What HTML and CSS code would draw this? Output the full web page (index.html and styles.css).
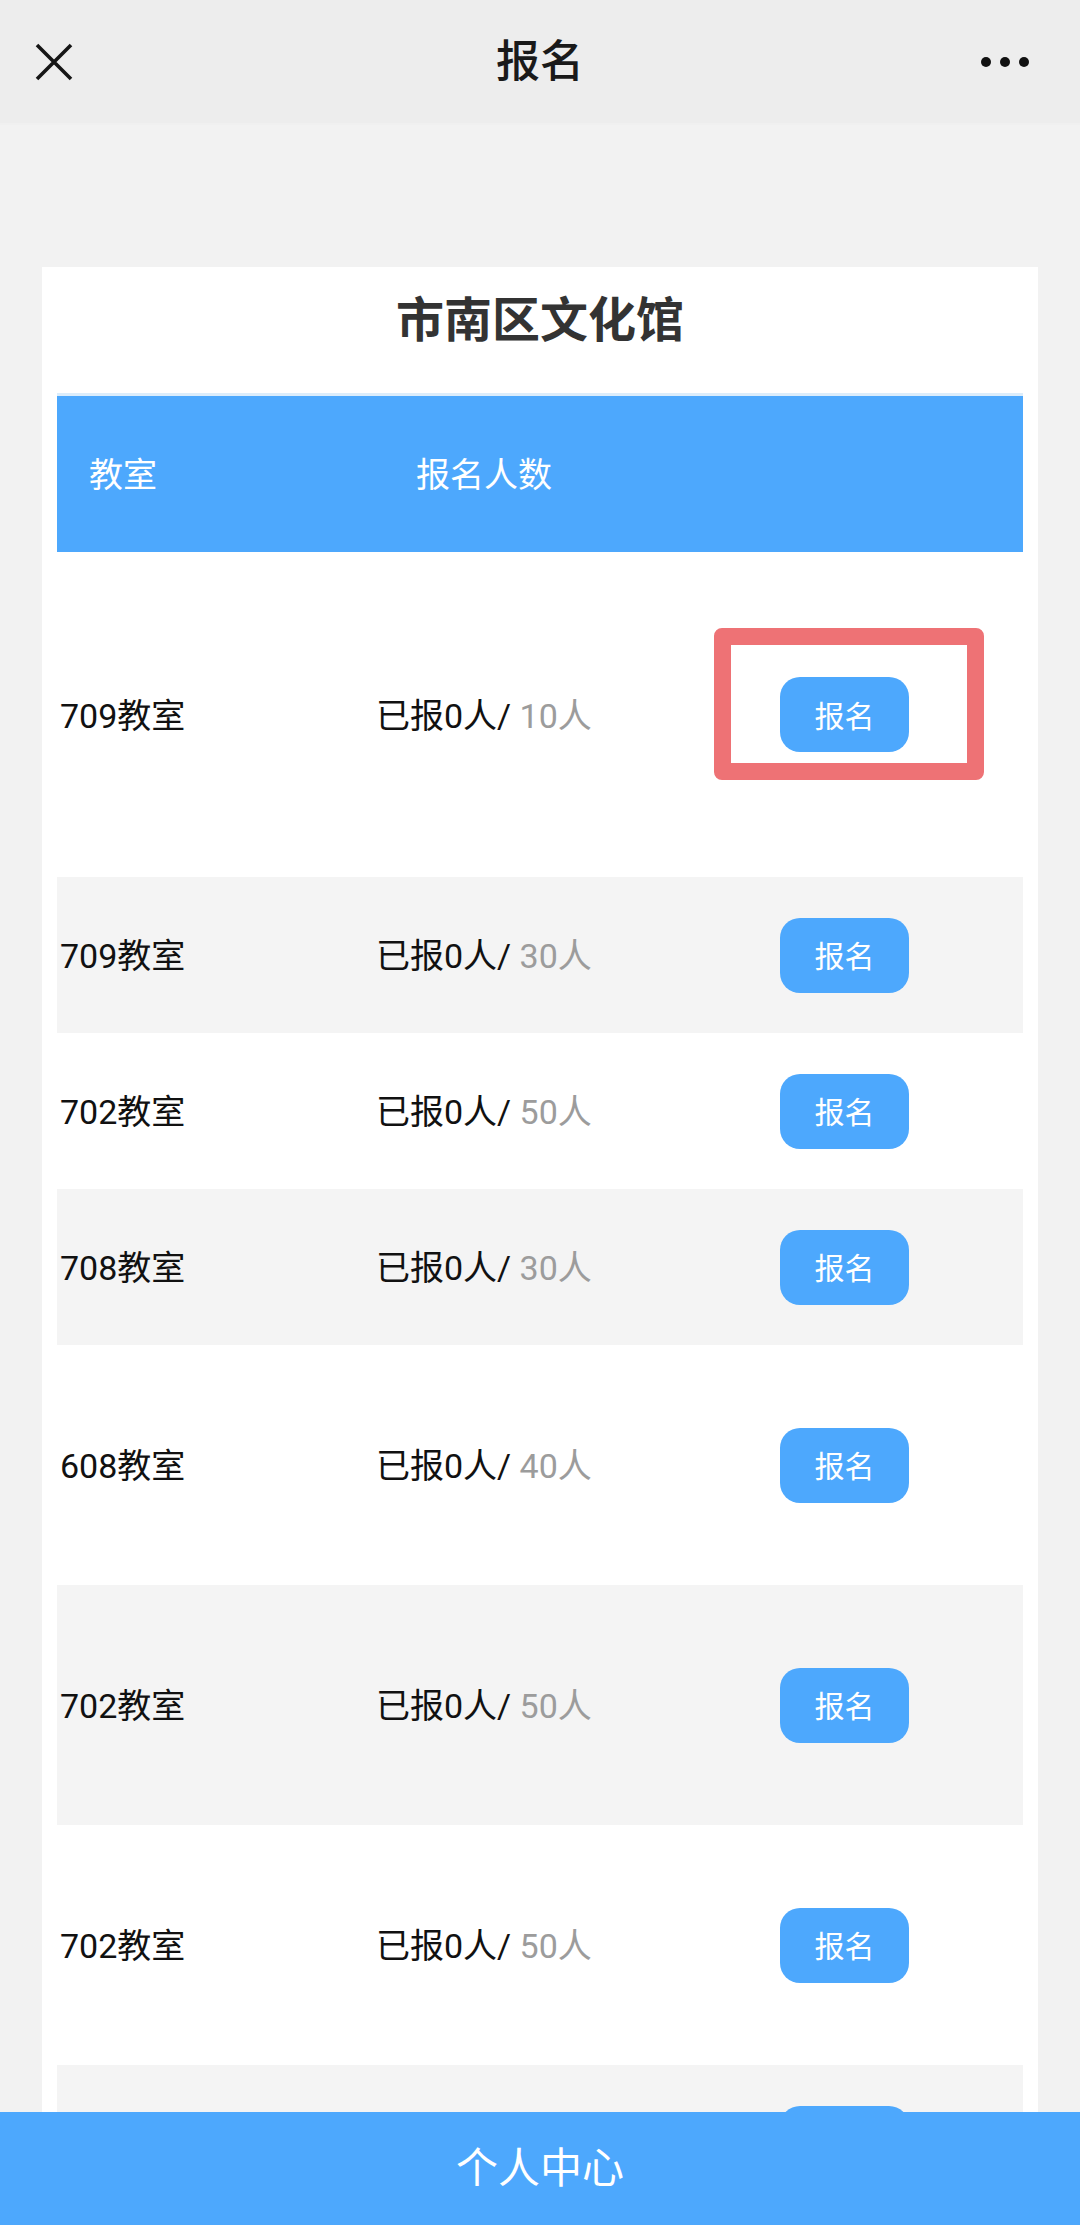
FILE: index.html
```html
<!DOCTYPE html>
<html lang="zh-CN">
<head>
    <meta charset="UTF-8">
    <meta name="viewport" content="width=device-width, initial-scale=1.0">
    <title>报名</title>
    <link rel="stylesheet" href="styles.css">
</head>
<body>
    <header class="navbar">
        <span class="nav-close">
            <svg width="38" height="38" viewBox="0 0 38 38">
                <path d="M2 2 L36 36 M36 2 L2 36" stroke="#161616" stroke-width="3.6" fill="none"/>
            </svg>
        </span>
        <h1 class="nav-title">报名</h1>
        <span class="nav-more"><i></i><i></i><i></i></span>
    </header>

    <main class="page">
        <section class="card">
            <h2 class="card-title">市南区文化馆</h2>

            <div class="table">
                <div class="table-head">
                    <span>教室</span>
                    <span>报名人数</span>
                </div>

                <div class="table-body">
                    <div class="row row-first">
                        <span>709教室</span>
                        <span>已报0人/ <em>10人</em></span>
                        <button class="btn">报名</button>
                        <div class="mark"></div>
                    </div>
                    <div class="row">
                        <span>709教室</span>
                        <span>已报0人/ <em>30人</em></span>
                        <button class="btn">报名</button>
                    </div>
                    <div class="row">
                        <span>702教室</span>
                        <span>已报0人/ <em>50人</em></span>
                        <button class="btn">报名</button>
                    </div>
                    <div class="row">
                        <span>708教室</span>
                        <span>已报0人/ <em>30人</em></span>
                        <button class="btn">报名</button>
                    </div>
                    <div class="row row-mid">
                        <span>608教室</span>
                        <span>已报0人/ <em>40人</em></span>
                        <button class="btn">报名</button>
                    </div>
                    <div class="row row-mid">
                        <span>702教室</span>
                        <span>已报0人/ <em>50人</em></span>
                        <button class="btn">报名</button>
                    </div>
                    <div class="row row-mid">
                        <span>702教室</span>
                        <span>已报0人/ <em>50人</em></span>
                        <button class="btn">报名</button>
                    </div>
                    <div class="row row-hidden">
                        <span></span>
                        <span></span>
                        <button class="btn"></button>
                    </div>
                </div>
            </div>
        </section>
    </main>

    <footer class="footer">个人中心</footer>
</body>
</html>
```

FILE: styles.css
```css
body {
    margin: 0;
    background: #f2f2f2;
    font-family: Roboto, "Noto Sans CJK SC", sans-serif;
    color: #111;
}
.navbar {
    display: grid;
    grid-template-columns: 1fr auto 1fr;
    align-items: center;
    height: 123px;
    background: #ededed;
    border-bottom: 2px solid #f0f0f0;
}
.nav-close {
    display: flex;
    padding-left: 35px;
}
.nav-title {
    margin: 0 0 8px;
    font-size: 44px;
    font-weight: 500;
    color: #1a1a1a;
}
.nav-more {
    display: flex;
    justify-content: flex-end;
    gap: 9px;
    padding-right: 51px;
}
.nav-more i {
    width: 10px;
    height: 10px;
    border-radius: 50%;
    background: #111;
}
.page {
    padding: 142px 42px 0;
}
.card {
    background: #fff;
    padding: 0 15px;
}
.card-title {
    margin: 0;
    padding: 30px 0 48px;
    line-height: 48px;
    font-size: 48px;
    font-weight: bold;
    color: #333;
    text-align: center;
}
.table {
    border-top: 3px solid #dcedfb;
}
.table-head {
    display: grid;
    grid-template-columns: 327px 1fr;
    align-items: center;
    height: 156px;
    background: #4da8fd;
    color: #fff;
    font-size: 34px;
}
.table-head span {
    padding-left: 32px;
    padding-bottom: 4px;
}
.row {
    display: grid;
    grid-template-columns: 316px 404px 1fr;
    align-items: center;
    height: 156px;
    padding-left: 3px;
    font-size: 34px;
    background: #fff;
}
.row span {
    padding-bottom: 3px;
}
.row:nth-child(even) {
    background: #f4f4f4;
}
.row-first {
    position: relative;
    height: 325px;
}
.row-mid {
    height: 240px;
}
.row em {
    font-style: normal;
    color: #9c9c9c;
}
.btn {
    justify-self: start;
    width: 129px;
    height: 75px;
    border: none;
    border-radius: 20px;
    background: #4da8fd;
    color: #fff;
    font-family: inherit;
    font-size: 30px;
    padding: 0 0 2px;
}
.mark {
    position: absolute;
    left: 657px;
    top: 76px;
    width: 270px;
    height: 152px;
    box-sizing: border-box;
    border: 17px solid #ee7275;
    border-radius: 8px;
}
.footer {
    position: fixed;
    left: 0;
    right: 0;
    bottom: 0;
    height: 113px;
    box-sizing: border-box;
    padding-bottom: 8px;
    display: flex;
    align-items: center;
    justify-content: center;
    background: #4da8fd;
    color: #fff;
    font-size: 42px;
}
```
